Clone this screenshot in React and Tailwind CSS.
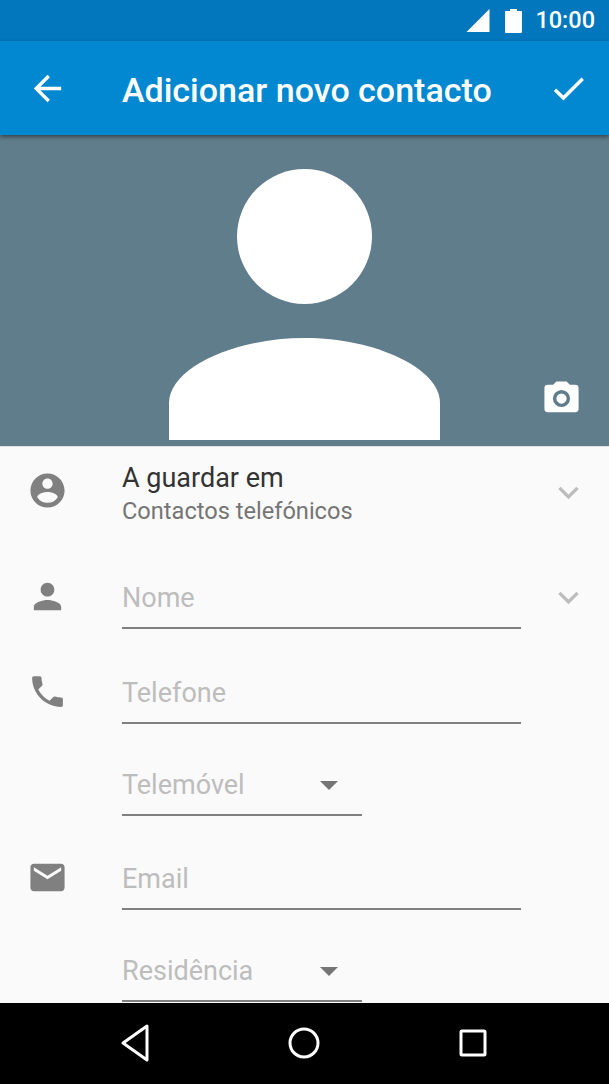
const Icon = ({ d, className = "", fill = "currentColor" }) => (
  <svg viewBox="0 0 24 24" className={className} fill={fill}>
    <path d={d} />
  </svg>
);

const chevron = "M7.41 8.59 12 13.17l4.59-4.58L18 10l-6 6-6-6z";

function Field({ label, icon, chevronRight, short, className = "" }) {
  return (
    <div className={`flex items-start ${className}`}>
      <div className="w-[122px] shrink-0 pl-[27px] -mt-[6px]">{icon}</div>
      <div
        className={`flex items-center justify-between h-[47px] pb-[13px] border-b-2 border-[#808080] text-[27px] leading-none text-[#bdbdbd] ${
          short ? "w-[240px] pr-[24px]" : "w-[399px]"
        }`}
      >
        <span>{label}</span>
        {short && <div className="w-0 h-0 border-x-[9px] border-x-transparent border-t-[9px] border-t-[#757575]" />}
      </div>
      {chevronRight && (
        <Icon d={chevron} className="w-[41px] h-[41px] ml-[27px] -mt-[5px] text-[#bdbdbd]" />
      )}
    </div>
  );
}

export default function App() {
  return (
    <div className="w-[609px] h-[1084px] flex flex-col overflow-hidden bg-[#fafafa] font-['Roboto',sans-serif]">
      {/* status bar */}
      <div className="h-[41px] bg-[#0277bd] flex items-center justify-end pr-[14px] text-white shrink-0">
        <svg viewBox="0 0 24 24" className="w-[24px] h-[23px] mr-[15px]" fill="currentColor">
          <path d="M0 24 24 0v24z" />
        </svg>
        <svg viewBox="0 0 17 24" className="w-[17px] h-[24px] mr-[13px]" fill="currentColor">
          <path d="M5 0h7v2h4a1 1 0 0 1 1 1v20a1 1 0 0 1-1 1H1a1 1 0 0 1-1-1V3a1 1 0 0 1 1-1h4z" />
        </svg>
        <span className="text-[23.5px] leading-none font-medium">10:00</span>
      </div>

      {/* app bar */}
      <div className="relative z-10 h-[94px] bg-[#0288d1] flex items-center text-white shrink-0 shadow-[0_2px_4px_rgba(0,0,0,0.45)]">
        <Icon
          d="M20 11H7.83l5.59-5.59L12 4l-8 8 8 8 1.41-1.41L7.83 13H20z"
          className="w-[41px] h-[41px] ml-[27px] mr-[54px]"
        />
        <span className="text-[34px] font-medium leading-none flex-1 pt-[3px]">Adicionar novo contacto</span>
        <Icon
          d="M9 16.17 4.83 12l-1.42 1.41L9 19 21 7l-1.41-1.41z"
          className="w-[41px] h-[41px] mr-[20px]"
        />
      </div>

      {/* photo area */}
      <div className="relative h-[311px] bg-[#607d8b] shrink-0 flex justify-center pt-[34px]">
        <svg viewBox="0 0 271 271" className="w-[271px] h-[271px]" fill="#fff">
          <circle cx="135.5" cy="67.5" r="67.5" />
          <path d="M0 271v-37c0-35 65-65 135.500-65S271 199 271 234v37z" />
        </svg>
        <svg viewBox="0 0 24 24" className="absolute right-[27px] top-[243px] w-[41px] h-[41px]" fill="#fff">
          <path
            fillRule="evenodd"
            d="M9 2 7.170 4H4a2 2 0 0 0-2 2v12a2 2 0 0 0 2 2h16a2 2 0 0 0 2-2V6a2 2 0 0 0-2-2h-3.170L15 2zm3 5a5 5 0 1 1 0 10 5 5 0 0 1 0-10zm0 2a3 3 0 1 0 0 6 3 3 0 0 0 0-6z"
          />
        </svg>
      </div>

      {/* form */}
      <div className="h-[557px] overflow-hidden border-t border-[#e0e0e0] shrink-0">
        <div className="flex items-start pt-[15px] h-[105px]">
          <div className="w-[122px] shrink-0 pl-[27px] pt-[8px]">
            <Icon
              d="M12 2C6.480 2 2 6.480 2 12s4.480 10 10 10 10-4.480 10-10S17.520 2 12 2zm0 3c1.660 0 3 1.340 3 3s-1.340 3-3 3-3-1.340-3-3 1.340-3 3-3zm0 14.200a7.200 7.200 0 0 1-6-3.220c.030-1.990 4-3.080 6-3.080 1.990 0 5.970 1.090 6 3.080a7.200 7.200 0 0 1-6 3.220z"
              className="w-[41px] h-[41px] text-[#808080]"
            />
          </div>
          <div className="w-[399px]">
            <div className="text-[27px] leading-[30px] mt-[1px] text-[#333333]">A guardar em</div>
            <div className="text-[23.6px] leading-[26px] mt-[5px] text-[#757575]">Contactos telefónicos</div>
          </div>
          <Icon d={chevron} className="w-[41px] h-[41px] ml-[27px] mt-[10px] text-[#bdbdbd]" />
        </div>

        <Field
          label="Nome"
          chevronRight
          className="mt-[30px]"
          icon={
            <Icon
              d="M12 12c2.210 0 4-1.790 4-4s-1.790-4-4-4-4 1.790-4 4 1.790 4 4 4zm0 2c-2.670 0-8 1.340-8 4v2h16v-2c0-2.660-5.330-4-8-4z"
              className="w-[41px] h-[41px] text-[#808080]"
            />
          }
        />
        <Field
          label="Telefone"
          className="mt-[48px]"
          icon={
            <Icon
              d="M6.620 10.790c1.440 2.830 3.760 5.140 6.590 6.590l2.200-2.200c.270-.270.670-.360 1.020-.240 1.120.370 2.330.570 3.570.570.550 0 1 .450 1 1V20c0 .550-.450 1-1 1-9.390 0-17-7.610-17-17 0-.550.450-1 1-1h3.500c.550 0 1 .450 1 1 0 1.250.200 2.450.570 3.570.110.350.030.740-.250 1.020l-2.200 2.200z"
              className="w-[41px] h-[41px] text-[#808080]"
            />
          }
        />
        <Field label="Telemóvel" short className="mt-[45px]" />
        <Field
          label="Email"
          className="mt-[47px]"
          icon={
            <Icon
              d="M20 4H4c-1.100 0-1.990.900-1.990 2L2 18c0 1.100.900 2 2 2h16c1.100 0 2-.900 2-2V6c0-1.100-.900-2-2-2zm0 4-8 5-8-5V6l8 5 8-5v2z"
              className="w-[41px] h-[41px] text-[#808080]"
            />
          }
        />
        <Field label="Residência" short className="mt-[45px]" />
      </div>

      {/* nav bar */}
      <div className="flex-1 bg-black flex items-center justify-center pb-[1px] pr-[2px]">
        <svg viewBox="0 0 30 38" className="w-[30px] h-[38px]" fill="none" stroke="#fff" strokeWidth="3" strokeLinejoin="round">
          <path d="M27 2v34L3 19z" />
        </svg>
        <svg viewBox="0 0 32 32" className="w-[32px] h-[32px] ml-[138px] mr-[139px]" fill="none" stroke="#fff" strokeWidth="3">
          <circle cx="16" cy="16" r="14" />
        </svg>
        <svg viewBox="0 0 28 28" className="w-[28px] h-[28px]" fill="none" stroke="#fff" strokeWidth="3" strokeLinejoin="round">
          <rect x="2" y="2" width="24" height="24" rx="1" />
        </svg>
      </div>
    </div>
  );
}
